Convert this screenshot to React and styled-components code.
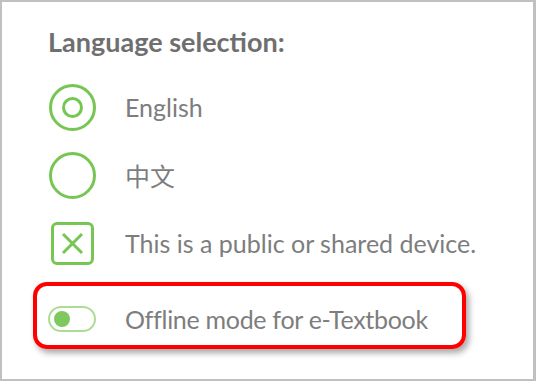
import React from 'react';
import styled, { createGlobalStyle } from 'styled-components';

const GlobalStyle = createGlobalStyle`
  html, body {
    margin: 0;
    padding: 0;
    background: #ffffff;
  }
  body {
    font-family: Lato, "Noto Sans", "Noto Sans CJK SC", sans-serif;
  }
`;

const green = '#77c653';

const Frame = styled.div`
  box-sizing: border-box;
  width: 536px;
  height: 381px;
  border: 2px solid #c0c0c0;
  border-right-width: 3px;
  background: #fff;
  padding: 24px 0 0 31px;
`;

const Title = styled.div`
  font-size: 27px;
  line-height: 32px;
  font-weight: 700;
  color: #6f6f6f;
  padding-left: 15px;
  margin-bottom: 15px;
`;

const Row = styled.div`
  display: flex;
  align-items: center;
  height: 68px;
  padding-left: 15px;
`;

const IconCell = styled.div`
  width: 48px;
  display: flex;
  justify-content: center;
  align-items: center;
  flex-shrink: 0;
`;

const Label = styled.span`
  margin-left: 29px;
  font-size: 25px;
  color: #7d7d7d;
  white-space: nowrap;
  letter-spacing: ${(p) => (p.$tight ? '-0.3px' : '0')};
`;

const Radio = styled.div`
  box-sizing: border-box;
  width: 47px;
  height: 47px;
  border: 3px solid ${green};
  border-radius: 50%;
  display: flex;
  align-items: center;
  justify-content: center;

  &::after {
    content: "";
    display: ${(p) => (p.$checked ? 'block' : 'none')};
    box-sizing: border-box;
    width: 21px;
    height: 21px;
    border: 3px solid ${green};
    border-radius: 50%;
  }
`;

const Checkbox = styled.div`
  box-sizing: border-box;
  width: 43px;
  height: 43px;
  border: 3px solid ${green};
  border-radius: 6px;
  display: flex;
  align-items: center;
  justify-content: center;
`;

const Highlight = styled.div`
  box-sizing: border-box;
  width: 433px;
  height: 67px;
  margin-top: 5px;
  border: 4px solid #ff0000;
  border-radius: 14px;
  box-shadow: 3px 4px 6px rgba(0, 0, 0, 0.35);
  display: flex;
  align-items: center;
  padding: 6px 0 0 11px;
`;

const Toggle = styled.div`
  box-sizing: border-box;
  width: 51px;
  height: 26px;
  border: 2px solid #addd94;
  border-radius: 13px;
  display: flex;
  align-items: center;
  padding-left: 4px;

  &::before {
    content: "";
    width: 16px;
    height: 16px;
    border-radius: 50%;
    background: #7dc95e;
  }
`;

const CrossIcon = () => (
  <svg width="23" height="23" viewBox="0 0 23 23">
    <path d="M2 2 L21 21 M21 2 L2 21" stroke={green} strokeWidth="3" fill="none" />
  </svg>
);

export default function App() {
  return (
    <>
      <GlobalStyle />
      <Frame>
        <Title>Language selection:</Title>
        <Row>
          <IconCell><Radio $checked /></IconCell>
          <Label>English</Label>
        </Row>
        <Row>
          <IconCell><Radio /></IconCell>
          <Label>中文</Label>
        </Row>
        <Row>
          <IconCell><Checkbox><CrossIcon /></Checkbox></IconCell>
          <Label>This is a public or shared device.</Label>
        </Row>
        <Highlight>
          <IconCell><Toggle /></IconCell>
          <Label $tight>Offline mode for e-Textbook</Label>
        </Highlight>
      </Frame>
    </>
  );
}
